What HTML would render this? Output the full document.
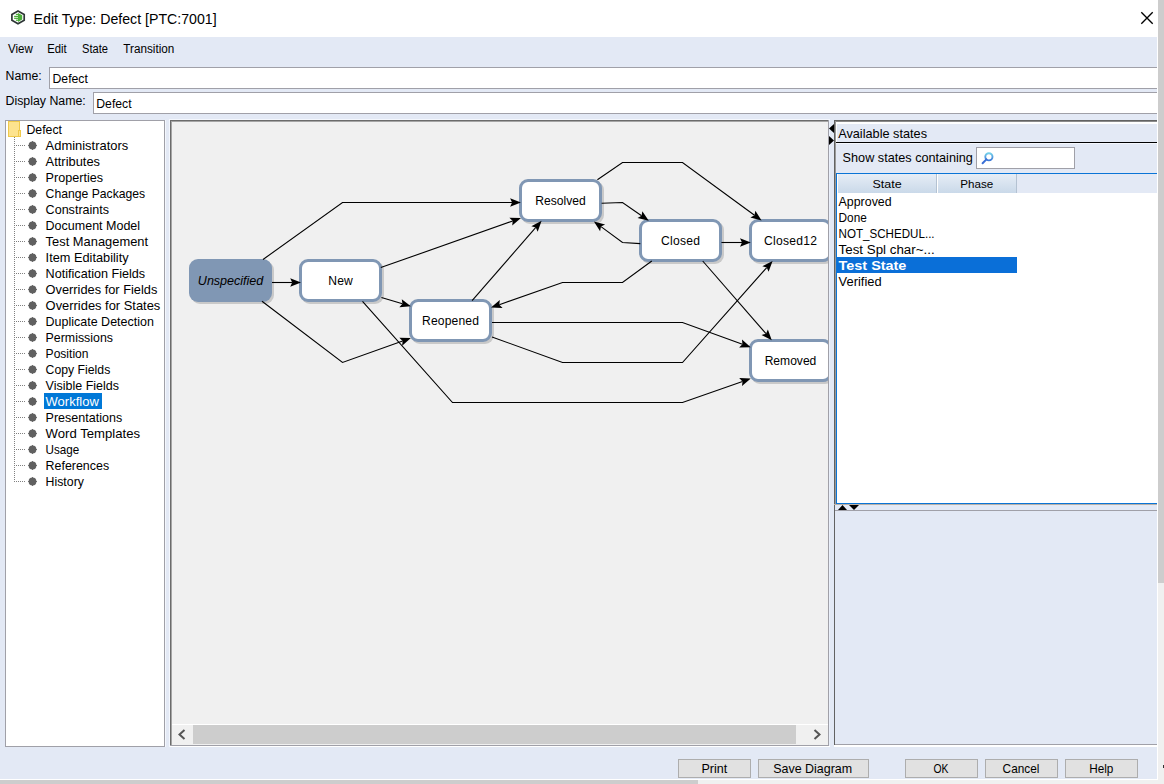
<!DOCTYPE html>
<html><head><meta charset="utf-8">
<style>
html,body{margin:0;padding:0;width:1164px;height:784px;overflow:hidden;background:#fff;}
svg{display:block;font-family:"Liberation Sans",sans-serif;}
text{stroke:none}
</style></head>
<body>
<svg width="1164" height="784" viewBox="0 0 1164 784">
<g shape-rendering="crispEdges">
<rect x="0" y="0" width="1164" height="784" fill="#ffffff"/>
<rect x="0" y="37" width="1157" height="742" fill="#e3e9f5"/>
<rect x="1158" y="0" width="6" height="784" fill="#f0f0f0"/>
<rect x="1158" y="0" width="6" height="583" fill="#cdcdcd"/>
<rect x="0" y="780" width="1158" height="4" fill="#f0f0f0"/>
<rect x="0" y="780" width="698" height="4" fill="#cdcdcd"/>
</g>
<path d="M18 11.1 L24.2 14.6 L24.2 20.3 L18 23.8 L11.9 20.3 L11.9 14.6 Z" fill="none" stroke="#2e3636" stroke-width="1.7"/>
<path d="M18 12.9 L22.2 15.3 L22.2 19.6 L18 21.9 Z" fill="#4caf3a"/>
<rect x="15.9" y="13.8" width="2.3" height="1.25" fill="#4caf3a"/>
<rect x="14.1" y="15.8" width="4.1" height="1.25" fill="#4caf3a"/>
<rect x="14.1" y="17.7" width="4.1" height="1.25" fill="#4caf3a"/>
<rect x="15.9" y="19.6" width="2.3" height="1.25" fill="#4caf3a"/>
<text x="33.6" y="24" font-size="14.2" fill="#000" textLength="183" lengthAdjust="spacingAndGlyphs" >Edit Type: Defect [PTC:7001]</text>
<path d="M1141.3 12.3 L1152.7 23.7 M1152.7 12.3 L1141.3 23.7" stroke="#000" stroke-width="1.35" fill="none"/>
<text x="8" y="53" font-size="12" fill="#000" textLength="24.8" lengthAdjust="spacingAndGlyphs" >View</text>
<text x="47.2" y="53" font-size="12" fill="#000" textLength="19.5" lengthAdjust="spacingAndGlyphs" >Edit</text>
<text x="82" y="53" font-size="12" fill="#000" textLength="26" lengthAdjust="spacingAndGlyphs" >State</text>
<text x="123.3" y="53" font-size="12" fill="#000" textLength="51" lengthAdjust="spacingAndGlyphs" >Transition</text>
<g shape-rendering="crispEdges">
<rect x="49.5" y="67.5" width="1107.5" height="21" fill="#fff"/>
<rect x="49" y="67" width="1108" height="1" fill="#a0a0a8"/><rect x="49" y="88" width="1108" height="1" fill="#a0a0a8"/><rect x="49" y="67" width="1" height="22" fill="#a0a0a8"/>
<rect x="93.5" y="92.5" width="1063.5" height="21" fill="#fff"/>
<rect x="93" y="92" width="1064" height="1" fill="#a0a0a8"/><rect x="93" y="113" width="1064" height="1" fill="#a0a0a8"/><rect x="93" y="92" width="1" height="22" fill="#a0a0a8"/>
</g>
<text x="5.5" y="80" font-size="12" fill="#000" textLength="36.2" lengthAdjust="spacingAndGlyphs" >Name:</text>
<text x="52.5" y="83" font-size="12.2" fill="#000" textLength="35.4" lengthAdjust="spacingAndGlyphs" >Defect</text>
<text x="5.5" y="105" font-size="12" fill="#000" textLength="80.3" lengthAdjust="spacingAndGlyphs" >Display Name:</text>
<text x="96.3" y="108" font-size="12.2" fill="#000" textLength="35.3" lengthAdjust="spacingAndGlyphs" >Defect</text>
<g shape-rendering="crispEdges">
<rect x="5.5" y="120.5" width="159" height="626" fill="#fff" stroke="#a0a0a8"/>
<rect x="8.5" y="121.5" width="11" height="15" fill="#fde38f" stroke="#efc94c"/>
<rect x="18.5" y="130.5" width="2" height="6" fill="#fde38f" stroke="#efc94c"/>
</g>
<text x="26.5" y="134" font-size="12.6" fill="#000" textLength="35.5" lengthAdjust="spacingAndGlyphs" >Defect</text>
<path d="M14 137h1v1h-1zM14 139h1v1h-1zM14 141h1v1h-1zM14 143h1v1h-1zM14 145h1v1h-1zM14 147h1v1h-1zM14 149h1v1h-1zM14 151h1v1h-1zM14 153h1v1h-1zM14 155h1v1h-1zM14 157h1v1h-1zM14 159h1v1h-1zM14 161h1v1h-1zM14 163h1v1h-1zM14 165h1v1h-1zM14 167h1v1h-1zM14 169h1v1h-1zM14 171h1v1h-1zM14 173h1v1h-1zM14 175h1v1h-1zM14 177h1v1h-1zM14 179h1v1h-1zM14 181h1v1h-1zM14 183h1v1h-1zM14 185h1v1h-1zM14 187h1v1h-1zM14 189h1v1h-1zM14 191h1v1h-1zM14 193h1v1h-1zM14 195h1v1h-1zM14 197h1v1h-1zM14 199h1v1h-1zM14 201h1v1h-1zM14 203h1v1h-1zM14 205h1v1h-1zM14 207h1v1h-1zM14 209h1v1h-1zM14 211h1v1h-1zM14 213h1v1h-1zM14 215h1v1h-1zM14 217h1v1h-1zM14 219h1v1h-1zM14 221h1v1h-1zM14 223h1v1h-1zM14 225h1v1h-1zM14 227h1v1h-1zM14 229h1v1h-1zM14 231h1v1h-1zM14 233h1v1h-1zM14 235h1v1h-1zM14 237h1v1h-1zM14 239h1v1h-1zM14 241h1v1h-1zM14 243h1v1h-1zM14 245h1v1h-1zM14 247h1v1h-1zM14 249h1v1h-1zM14 251h1v1h-1zM14 253h1v1h-1zM14 255h1v1h-1zM14 257h1v1h-1zM14 259h1v1h-1zM14 261h1v1h-1zM14 263h1v1h-1zM14 265h1v1h-1zM14 267h1v1h-1zM14 269h1v1h-1zM14 271h1v1h-1zM14 273h1v1h-1zM14 275h1v1h-1zM14 277h1v1h-1zM14 279h1v1h-1zM14 281h1v1h-1zM14 283h1v1h-1zM14 285h1v1h-1zM14 287h1v1h-1zM14 289h1v1h-1zM14 291h1v1h-1zM14 293h1v1h-1zM14 295h1v1h-1zM14 297h1v1h-1zM14 299h1v1h-1zM14 301h1v1h-1zM14 303h1v1h-1zM14 305h1v1h-1zM14 307h1v1h-1zM14 309h1v1h-1zM14 311h1v1h-1zM14 313h1v1h-1zM14 315h1v1h-1zM14 317h1v1h-1zM14 319h1v1h-1zM14 321h1v1h-1zM14 323h1v1h-1zM14 325h1v1h-1zM14 327h1v1h-1zM14 329h1v1h-1zM14 331h1v1h-1zM14 333h1v1h-1zM14 335h1v1h-1zM14 337h1v1h-1zM14 339h1v1h-1zM14 341h1v1h-1zM14 343h1v1h-1zM14 345h1v1h-1zM14 347h1v1h-1zM14 349h1v1h-1zM14 351h1v1h-1zM14 353h1v1h-1zM14 355h1v1h-1zM14 357h1v1h-1zM14 359h1v1h-1zM14 361h1v1h-1zM14 363h1v1h-1zM14 365h1v1h-1zM14 367h1v1h-1zM14 369h1v1h-1zM14 371h1v1h-1zM14 373h1v1h-1zM14 375h1v1h-1zM14 377h1v1h-1zM14 379h1v1h-1zM14 381h1v1h-1zM14 383h1v1h-1zM14 385h1v1h-1zM14 387h1v1h-1zM14 389h1v1h-1zM14 391h1v1h-1zM14 393h1v1h-1zM14 395h1v1h-1zM14 397h1v1h-1zM14 399h1v1h-1zM14 401h1v1h-1zM14 403h1v1h-1zM14 405h1v1h-1zM14 407h1v1h-1zM14 409h1v1h-1zM14 411h1v1h-1zM14 413h1v1h-1zM14 415h1v1h-1zM14 417h1v1h-1zM14 419h1v1h-1zM14 421h1v1h-1zM14 423h1v1h-1zM14 425h1v1h-1zM14 427h1v1h-1zM14 429h1v1h-1zM14 431h1v1h-1zM14 433h1v1h-1zM14 435h1v1h-1zM14 437h1v1h-1zM14 439h1v1h-1zM14 441h1v1h-1zM14 443h1v1h-1zM14 445h1v1h-1zM14 447h1v1h-1zM14 449h1v1h-1zM14 451h1v1h-1zM14 453h1v1h-1zM14 455h1v1h-1zM14 457h1v1h-1zM14 459h1v1h-1zM14 461h1v1h-1zM14 463h1v1h-1zM14 465h1v1h-1zM14 467h1v1h-1zM14 469h1v1h-1zM14 471h1v1h-1zM14 473h1v1h-1zM14 475h1v1h-1zM14 477h1v1h-1zM14 479h1v1h-1zM14 481h1v1h-1zM16 145h1v1h-1zM18 145h1v1h-1zM20 145h1v1h-1zM22 145h1v1h-1zM24 145h1v1h-1zM16 161h1v1h-1zM18 161h1v1h-1zM20 161h1v1h-1zM22 161h1v1h-1zM24 161h1v1h-1zM16 177h1v1h-1zM18 177h1v1h-1zM20 177h1v1h-1zM22 177h1v1h-1zM24 177h1v1h-1zM16 193h1v1h-1zM18 193h1v1h-1zM20 193h1v1h-1zM22 193h1v1h-1zM24 193h1v1h-1zM16 209h1v1h-1zM18 209h1v1h-1zM20 209h1v1h-1zM22 209h1v1h-1zM24 209h1v1h-1zM16 225h1v1h-1zM18 225h1v1h-1zM20 225h1v1h-1zM22 225h1v1h-1zM24 225h1v1h-1zM16 241h1v1h-1zM18 241h1v1h-1zM20 241h1v1h-1zM22 241h1v1h-1zM24 241h1v1h-1zM16 257h1v1h-1zM18 257h1v1h-1zM20 257h1v1h-1zM22 257h1v1h-1zM24 257h1v1h-1zM16 273h1v1h-1zM18 273h1v1h-1zM20 273h1v1h-1zM22 273h1v1h-1zM24 273h1v1h-1zM16 289h1v1h-1zM18 289h1v1h-1zM20 289h1v1h-1zM22 289h1v1h-1zM24 289h1v1h-1zM16 305h1v1h-1zM18 305h1v1h-1zM20 305h1v1h-1zM22 305h1v1h-1zM24 305h1v1h-1zM16 321h1v1h-1zM18 321h1v1h-1zM20 321h1v1h-1zM22 321h1v1h-1zM24 321h1v1h-1zM16 337h1v1h-1zM18 337h1v1h-1zM20 337h1v1h-1zM22 337h1v1h-1zM24 337h1v1h-1zM16 353h1v1h-1zM18 353h1v1h-1zM20 353h1v1h-1zM22 353h1v1h-1zM24 353h1v1h-1zM16 369h1v1h-1zM18 369h1v1h-1zM20 369h1v1h-1zM22 369h1v1h-1zM24 369h1v1h-1zM16 385h1v1h-1zM18 385h1v1h-1zM20 385h1v1h-1zM22 385h1v1h-1zM24 385h1v1h-1zM16 401h1v1h-1zM18 401h1v1h-1zM20 401h1v1h-1zM22 401h1v1h-1zM24 401h1v1h-1zM16 417h1v1h-1zM18 417h1v1h-1zM20 417h1v1h-1zM22 417h1v1h-1zM24 417h1v1h-1zM16 433h1v1h-1zM18 433h1v1h-1zM20 433h1v1h-1zM22 433h1v1h-1zM24 433h1v1h-1zM16 449h1v1h-1zM18 449h1v1h-1zM20 449h1v1h-1zM22 449h1v1h-1zM24 449h1v1h-1zM16 465h1v1h-1zM18 465h1v1h-1zM20 465h1v1h-1zM22 465h1v1h-1zM24 465h1v1h-1zM16 481h1v1h-1zM18 481h1v1h-1zM20 481h1v1h-1zM22 481h1v1h-1zM24 481h1v1h-1z" fill="#808080" shape-rendering="crispEdges"/>
<circle cx="32.5" cy="145.5" r="3.9" fill="#606060"/>
<path d="M32 141h1v1h-1zM32 149h1v1h-1zM28 145h1v1h-1zM36 145h1v1h-1z" fill="#6a6a6a" shape-rendering="crispEdges"/>
<text x="45.6" y="149.75" font-size="12.6" fill="#000" textLength="82.6" lengthAdjust="spacingAndGlyphs" >Administrators</text>
<circle cx="32.5" cy="161.5" r="3.9" fill="#606060"/>
<path d="M32 157h1v1h-1zM32 165h1v1h-1zM28 161h1v1h-1zM36 161h1v1h-1z" fill="#6a6a6a" shape-rendering="crispEdges"/>
<text x="45.6" y="165.75" font-size="12.6" fill="#000" textLength="54.4" lengthAdjust="spacingAndGlyphs" >Attributes</text>
<circle cx="32.5" cy="177.5" r="3.9" fill="#606060"/>
<path d="M32 173h1v1h-1zM32 181h1v1h-1zM28 177h1v1h-1zM36 177h1v1h-1z" fill="#6a6a6a" shape-rendering="crispEdges"/>
<text x="45.6" y="181.75" font-size="12.6" fill="#000" textLength="57.4" lengthAdjust="spacingAndGlyphs" >Properties</text>
<circle cx="32.5" cy="193.5" r="3.9" fill="#606060"/>
<path d="M32 189h1v1h-1zM32 197h1v1h-1zM28 193h1v1h-1zM36 193h1v1h-1z" fill="#6a6a6a" shape-rendering="crispEdges"/>
<text x="45.6" y="197.75" font-size="12.6" fill="#000" textLength="99.6" lengthAdjust="spacingAndGlyphs" >Change Packages</text>
<circle cx="32.5" cy="209.5" r="3.9" fill="#606060"/>
<path d="M32 205h1v1h-1zM32 213h1v1h-1zM28 209h1v1h-1zM36 209h1v1h-1z" fill="#6a6a6a" shape-rendering="crispEdges"/>
<text x="45.6" y="213.75" font-size="12.6" fill="#000" textLength="63.5" lengthAdjust="spacingAndGlyphs" >Constraints</text>
<circle cx="32.5" cy="225.5" r="3.9" fill="#606060"/>
<path d="M32 221h1v1h-1zM32 229h1v1h-1zM28 225h1v1h-1zM36 225h1v1h-1z" fill="#6a6a6a" shape-rendering="crispEdges"/>
<text x="45.6" y="229.75" font-size="12.6" fill="#000" textLength="94.5" lengthAdjust="spacingAndGlyphs" >Document Model</text>
<circle cx="32.5" cy="241.5" r="3.9" fill="#606060"/>
<path d="M32 237h1v1h-1zM32 245h1v1h-1zM28 241h1v1h-1zM36 241h1v1h-1z" fill="#6a6a6a" shape-rendering="crispEdges"/>
<text x="45.6" y="245.75" font-size="12.6" fill="#000" textLength="102.5" lengthAdjust="spacingAndGlyphs" >Test Management</text>
<circle cx="32.5" cy="257.5" r="3.9" fill="#606060"/>
<path d="M32 253h1v1h-1zM32 261h1v1h-1zM28 257h1v1h-1zM36 257h1v1h-1z" fill="#6a6a6a" shape-rendering="crispEdges"/>
<text x="45.6" y="261.75" font-size="12.6" fill="#000" textLength="83" lengthAdjust="spacingAndGlyphs" >Item Editability</text>
<circle cx="32.5" cy="273.5" r="3.9" fill="#606060"/>
<path d="M32 269h1v1h-1zM32 277h1v1h-1zM28 273h1v1h-1zM36 273h1v1h-1z" fill="#6a6a6a" shape-rendering="crispEdges"/>
<text x="45.6" y="277.75" font-size="12.6" fill="#000" textLength="99.6" lengthAdjust="spacingAndGlyphs" >Notification Fields</text>
<circle cx="32.5" cy="289.5" r="3.9" fill="#606060"/>
<path d="M32 285h1v1h-1zM32 293h1v1h-1zM28 289h1v1h-1zM36 289h1v1h-1z" fill="#6a6a6a" shape-rendering="crispEdges"/>
<text x="45.6" y="293.75" font-size="12.6" fill="#000" textLength="111.7" lengthAdjust="spacingAndGlyphs" >Overrides for Fields</text>
<circle cx="32.5" cy="305.5" r="3.9" fill="#606060"/>
<path d="M32 301h1v1h-1zM32 309h1v1h-1zM28 305h1v1h-1zM36 305h1v1h-1z" fill="#6a6a6a" shape-rendering="crispEdges"/>
<text x="45.6" y="309.75" font-size="12.6" fill="#000" textLength="114.7" lengthAdjust="spacingAndGlyphs" >Overrides for States</text>
<circle cx="32.5" cy="321.5" r="3.9" fill="#606060"/>
<path d="M32 317h1v1h-1zM32 325h1v1h-1zM28 321h1v1h-1zM36 321h1v1h-1z" fill="#6a6a6a" shape-rendering="crispEdges"/>
<text x="45.6" y="325.75" font-size="12.6" fill="#000" textLength="108.3" lengthAdjust="spacingAndGlyphs" >Duplicate Detection</text>
<circle cx="32.5" cy="337.5" r="3.9" fill="#606060"/>
<path d="M32 333h1v1h-1zM32 341h1v1h-1zM28 337h1v1h-1zM36 337h1v1h-1z" fill="#6a6a6a" shape-rendering="crispEdges"/>
<text x="45.6" y="341.75" font-size="12.6" fill="#000" textLength="67.4" lengthAdjust="spacingAndGlyphs" >Permissions</text>
<circle cx="32.5" cy="353.5" r="3.9" fill="#606060"/>
<path d="M32 349h1v1h-1zM32 357h1v1h-1zM28 353h1v1h-1zM36 353h1v1h-1z" fill="#6a6a6a" shape-rendering="crispEdges"/>
<text x="45.6" y="357.75" font-size="12.6" fill="#000" textLength="42.9" lengthAdjust="spacingAndGlyphs" >Position</text>
<circle cx="32.5" cy="369.5" r="3.9" fill="#606060"/>
<path d="M32 365h1v1h-1zM32 373h1v1h-1zM28 369h1v1h-1zM36 369h1v1h-1z" fill="#6a6a6a" shape-rendering="crispEdges"/>
<text x="45.6" y="373.75" font-size="12.6" fill="#000" textLength="64.7" lengthAdjust="spacingAndGlyphs" >Copy Fields</text>
<circle cx="32.5" cy="385.5" r="3.9" fill="#606060"/>
<path d="M32 381h1v1h-1zM32 389h1v1h-1zM28 385h1v1h-1zM36 385h1v1h-1z" fill="#6a6a6a" shape-rendering="crispEdges"/>
<text x="45.6" y="389.75" font-size="12.6" fill="#000" textLength="73.4" lengthAdjust="spacingAndGlyphs" >Visible Fields</text>
<circle cx="32.5" cy="401.5" r="3.9" fill="#606060"/>
<path d="M32 397h1v1h-1zM32 405h1v1h-1zM28 401h1v1h-1zM36 401h1v1h-1z" fill="#6a6a6a" shape-rendering="crispEdges"/>
<rect x="44" y="393" width="58" height="16" fill="#0078d7" shape-rendering="crispEdges"/>
<text x="45.6" y="405.75" font-size="12.6" fill="#fff" textLength="53.2" lengthAdjust="spacingAndGlyphs" >Workflow</text>
<circle cx="32.5" cy="417.5" r="3.9" fill="#606060"/>
<path d="M32 413h1v1h-1zM32 421h1v1h-1zM28 417h1v1h-1zM36 417h1v1h-1z" fill="#6a6a6a" shape-rendering="crispEdges"/>
<text x="45.6" y="421.75" font-size="12.6" fill="#000" textLength="76.6" lengthAdjust="spacingAndGlyphs" >Presentations</text>
<circle cx="32.5" cy="433.5" r="3.9" fill="#606060"/>
<path d="M32 429h1v1h-1zM32 437h1v1h-1zM28 433h1v1h-1zM36 433h1v1h-1z" fill="#6a6a6a" shape-rendering="crispEdges"/>
<text x="45.6" y="437.75" font-size="12.6" fill="#000" textLength="94.5" lengthAdjust="spacingAndGlyphs" >Word Templates</text>
<circle cx="32.5" cy="449.5" r="3.9" fill="#606060"/>
<path d="M32 445h1v1h-1zM32 453h1v1h-1zM28 449h1v1h-1zM36 449h1v1h-1z" fill="#6a6a6a" shape-rendering="crispEdges"/>
<text x="45.6" y="453.75" font-size="12.6" fill="#000" textLength="33.7" lengthAdjust="spacingAndGlyphs" >Usage</text>
<circle cx="32.5" cy="465.5" r="3.9" fill="#606060"/>
<path d="M32 461h1v1h-1zM32 469h1v1h-1zM28 465h1v1h-1zM36 465h1v1h-1z" fill="#6a6a6a" shape-rendering="crispEdges"/>
<text x="45.6" y="469.75" font-size="12.6" fill="#000" textLength="63.5" lengthAdjust="spacingAndGlyphs" >References</text>
<circle cx="32.5" cy="481.5" r="3.9" fill="#606060"/>
<path d="M32 477h1v1h-1zM32 485h1v1h-1zM28 481h1v1h-1zM36 481h1v1h-1z" fill="#6a6a6a" shape-rendering="crispEdges"/>
<text x="45.6" y="485.75" font-size="12.6" fill="#000" textLength="38.3" lengthAdjust="spacingAndGlyphs" >History</text>
<g shape-rendering="crispEdges">
<rect x="170" y="120" width="659" height="626" fill="#f0f0f0"/>
</g>
<defs><clipPath id="dclip"><rect x="171" y="121" width="657" height="603"/></clipPath></defs>
<g clip-path="url(#dclip)">
<rect x="191" y="261" width="83" height="43" rx="9" fill="#c9c9c9"/>
<rect x="189" y="259" width="83" height="43" rx="9" fill="#8097b4"/>
<text x="197.85" y="285" font-size="12.6" fill="#000" textLength="65.3" lengthAdjust="spacing" font-style="italic" >Unspecified</text>
<rect x="301" y="261" width="83" height="43" rx="9" fill="#c9c9c9"/>
<rect x="300.5" y="260.5" width="80" height="40" rx="7.5" fill="#fff" stroke="#8097b4" stroke-width="3"/>
<text x="328.32" y="285" font-size="12.1" fill="#000" textLength="24.35" lengthAdjust="spacing" >New</text>
<rect x="411" y="301" width="83" height="43" rx="9" fill="#c9c9c9"/>
<rect x="410.5" y="300.5" width="80" height="40" rx="7.5" fill="#fff" stroke="#8097b4" stroke-width="3"/>
<text x="422.05" y="325" font-size="12.1" fill="#000" textLength="56.9" lengthAdjust="spacing" >Reopened</text>
<rect x="521" y="181" width="83" height="43" rx="9" fill="#c9c9c9"/>
<rect x="520.5" y="180.5" width="80" height="40" rx="7.5" fill="#fff" stroke="#8097b4" stroke-width="3"/>
<text x="535.2" y="205" font-size="12.1" fill="#000" textLength="50.6" lengthAdjust="spacing" >Resolved</text>
<rect x="641" y="221" width="83" height="43" rx="9" fill="#c9c9c9"/>
<rect x="640.5" y="220.5" width="80" height="40" rx="7.5" fill="#fff" stroke="#8097b4" stroke-width="3"/>
<text x="661.1" y="245" font-size="12.1" fill="#000" textLength="38.8" lengthAdjust="spacing" >Closed</text>
<rect x="751" y="221" width="83" height="43" rx="9" fill="#c9c9c9"/>
<rect x="750.5" y="220.5" width="80" height="40" rx="7.5" fill="#fff" stroke="#8097b4" stroke-width="3"/>
<text x="764.05" y="245" font-size="12.1" fill="#000" textLength="52.9" lengthAdjust="spacing" >Closed12</text>
<rect x="751" y="341" width="83" height="43" rx="9" fill="#c9c9c9"/>
<rect x="750.5" y="340.5" width="80" height="40" rx="7.5" fill="#fff" stroke="#8097b4" stroke-width="3"/>
<text x="764.65" y="365" font-size="12.1" fill="#000" textLength="51.7" lengthAdjust="spacing" >Removed</text>
<path d="M272 282.5 L292.20 282.50" fill="none" stroke="#000" stroke-width="1.1" stroke-linejoin="miter"/>
<path d="M301 282.5 L290.20 286.70 L292.20 282.50 L290.20 278.30 Z" fill="#000"/>
<path d="M263 259.5 L342.5 202.5 L512.10 202.50" fill="none" stroke="#000" stroke-width="1.1" stroke-linejoin="miter"/>
<path d="M520.9 202.5 L510.10 206.70 L512.10 202.50 L510.10 198.30 Z" fill="#000"/>
<path d="M262 301.3 L342.5 362.5 L402.61 341.06" fill="none" stroke="#000" stroke-width="1.1" stroke-linejoin="miter"/>
<path d="M410.9 338.1 L402.14 345.68 L402.61 341.06 L399.32 337.77 Z" fill="#000"/>
<path d="M380.8 267.6 L512.70 220.94" fill="none" stroke="#000" stroke-width="1.1" stroke-linejoin="miter"/>
<path d="M521 218 L512.22 225.56 L512.70 220.94 L509.42 217.64 Z" fill="#000"/>
<path d="M381.4 297.5 L402.47 303.78" fill="none" stroke="#000" stroke-width="1.1" stroke-linejoin="miter"/>
<path d="M410.9 306.3 L399.35 307.24 L402.47 303.78 L401.75 299.19 Z" fill="#000"/>
<path d="M362.5 301.3 L452.5 402.5 L682.5 402.5 L742.50 381.42" fill="none" stroke="#000" stroke-width="1.1" stroke-linejoin="miter"/>
<path d="M750.8 378.5 L742.00 386.04 L742.50 381.42 L739.22 378.12 Z" fill="#000"/>
<path d="M472.1 300.6 L535.82 227.44" fill="none" stroke="#000" stroke-width="1.1" stroke-linejoin="miter"/>
<path d="M541.6 220.8 L537.67 231.70 L535.82 227.44 L531.34 226.19 Z" fill="#000"/>
<path d="M492 322.5 L682.5 322.5 L742.43 344.20" fill="none" stroke="#000" stroke-width="1.1" stroke-linejoin="miter"/>
<path d="M750.7 347.2 L739.12 347.47 L742.43 344.20 L741.98 339.57 Z" fill="#000"/>
<path d="M492 337 L562.5 362.5 L682.5 362.5 L766.76 267.58" fill="none" stroke="#000" stroke-width="1.1" stroke-linejoin="miter"/>
<path d="M772.6 261 L768.57 271.87 L766.76 267.58 L762.29 266.29 Z" fill="#000"/>
<path d="M601.6 203.3 L622.5 202.5 L641.58 215.77" fill="none" stroke="#000" stroke-width="1.1" stroke-linejoin="miter"/>
<path d="M648.8 220.8 L637.54 218.08 L641.58 215.77 L642.33 211.18 Z" fill="#000"/>
<path d="M597.4 179.7 L622.5 162.5 L682.5 162.5 L754.50 215.20" fill="none" stroke="#000" stroke-width="1.1" stroke-linejoin="miter"/>
<path d="M761.6 220.4 L750.40 217.41 L754.50 215.20 L755.37 210.63 Z" fill="#000"/>
<path d="M640.3 243.6 L622.5 242.5 L600.98 226.62" fill="none" stroke="#000" stroke-width="1.1" stroke-linejoin="miter"/>
<path d="M593.9 221.4 L605.08 224.43 L600.98 226.62 L600.10 231.19 Z" fill="#000"/>
<path d="M651.8 261 L622.5 282.5 L562.5 282.5 L499.30 304.69" fill="none" stroke="#000" stroke-width="1.1" stroke-linejoin="miter"/>
<path d="M491 307.6 L499.80 300.06 L499.30 304.69 L502.58 307.99 Z" fill="#000"/>
<path d="M721.4 242.5 L742.00 242.50" fill="none" stroke="#000" stroke-width="1.1" stroke-linejoin="miter"/>
<path d="M750.8 242.5 L740.00 246.70 L742.00 242.50 L740.00 238.30 Z" fill="#000"/>
<path d="M702.7 261 L766.02 333.67" fill="none" stroke="#000" stroke-width="1.1" stroke-linejoin="miter"/>
<path d="M771.8 340.3 L761.54 334.92 L766.02 333.67 L767.87 329.40 Z" fill="#000"/>
</g>
<g shape-rendering="crispEdges">
<rect x="165" y="120" width="1" height="627" fill="#f4f7fd"/>
<rect x="169" y="119" width="661" height="1" fill="#f4f7fd"/>
<rect x="169" y="119" width="1" height="628" fill="#f4f7fd"/>
<rect x="170" y="120" width="659" height="1" fill="#6b6b6b"/>
<rect x="170" y="120" width="1" height="626" fill="#6b6b6b"/>
<rect x="171" y="121" width="657" height="1" fill="#a5a5a5"/>
<rect x="171" y="121" width="1" height="624" fill="#a5a5a5"/>
<rect x="828" y="120" width="1" height="626" fill="#a0a0a8"/>
<rect x="170" y="745" width="659" height="1" fill="#a0a0a8"/>
<rect x="829" y="120" width="1" height="627" fill="#eaf0fb"/>
<rect x="170" y="746" width="660" height="1" fill="#ffffff"/>
<rect x="172" y="724" width="656" height="1" fill="#ffffff"/>
<rect x="172" y="725" width="656" height="20" fill="#f0f0f0"/>
<rect x="193" y="725" width="603" height="19" fill="#cdcdcd"/>
</g>
<path d="M184.5 730 L179.5 734.5 L184.5 739" fill="none" stroke="#555" stroke-width="2"/>
<path d="M814.5 730 L819.5 734.5 L814.5 739" fill="none" stroke="#555" stroke-width="2"/>
<g shape-rendering="crispEdges">
<path d="M834 124 L829 128.5 L834 133 Z" fill="#000" shape-rendering="geometricPrecision"/>
<path d="M829 136 L834 140.5 L829 145 Z" fill="#000" shape-rendering="geometricPrecision"/>
<rect x="834" y="120" width="323" height="1" fill="#626262"/>
<rect x="834" y="121" width="323" height="1" fill="#8a8a8a"/>
<rect x="834" y="120" width="1" height="625" fill="#626262"/>
<rect x="835" y="121" width="1" height="383" fill="#9a9a9a"/>
<rect x="836" y="122" width="321" height="2" fill="#ffffff"/>
<rect x="836" y="122" width="1" height="20" fill="#ffffff"/>
<rect x="836" y="142" width="321" height="1" fill="#000000"/>
<rect x="836" y="143" width="321" height="1" fill="#f4f7fd"/>
<rect x="976.5" y="147.5" width="98" height="21" fill="#fff" stroke="#a0a0a8"/>
<rect x="836" y="173" width="321" height="331" fill="#ffffff"/>
<rect x="836" y="173" width="321" height="1" fill="#0a74d6"/>
<rect x="836" y="173" width="1" height="331" fill="#0a74d6"/>
<rect x="836" y="503" width="321" height="1" fill="#0a74d6"/>
<rect x="837" y="174" width="320" height="19" fill="#e3e9f5"/>
</g>
<defs><linearGradient id="hg" x1="0" y1="0" x2="0" y2="1"><stop offset="0" stop-color="#e6edf6"/><stop offset="1" stop-color="#cad9e9"/></linearGradient></defs>
<g shape-rendering="crispEdges">
<rect x="837" y="174" width="180" height="19" fill="url(#hg)"/>
<rect x="837" y="174" width="1" height="19" fill="#ffffff"/>
<rect x="936" y="174" width="1" height="19" fill="#b4c2d2"/>
<rect x="937" y="174" width="1" height="19" fill="#ffffff"/>
<rect x="1016" y="174" width="1" height="19" fill="#b4c2d2"/>
<rect x="837" y="257" width="180" height="16" fill="#0a6fd8"/>
</g>
<defs><linearGradient id="mg" x1="0" y1="0" x2="0" y2="1"><stop offset="0" stop-color="#74d0ea"/><stop offset="1" stop-color="#3c78d8"/></linearGradient></defs>
<circle cx="988.9" cy="156.8" r="3.6" fill="none" stroke="url(#mg)" stroke-width="1.9"/>
<path d="M986.4 159.4 L982.6 163.2" stroke="#3a6fd6" stroke-width="2" stroke-linecap="round"/>
<text x="838.2" y="137.7" font-size="12.2" fill="#000" textLength="88.8" lengthAdjust="spacingAndGlyphs" >Available states</text>
<text x="842.6" y="161.6" font-size="12.2" fill="#000" textLength="130.3" lengthAdjust="spacingAndGlyphs" >Show states containing</text>
<text x="872.5" y="187.8" font-size="11.6" fill="#000" textLength="29.2" lengthAdjust="spacingAndGlyphs" >State</text>
<text x="960.3" y="187.7" font-size="11.6" fill="#000" textLength="33" lengthAdjust="spacingAndGlyphs" >Phase</text>
<text x="838.6" y="205.75" font-size="12" fill="#000" textLength="53" lengthAdjust="spacingAndGlyphs" >Approved</text>
<text x="838.6" y="221.75" font-size="12" fill="#000" textLength="28.2" lengthAdjust="spacingAndGlyphs" >Done</text>
<text x="838.6" y="237.75" font-size="12" fill="#000" textLength="96" lengthAdjust="spacingAndGlyphs" >NOT_SCHEDUL...</text>
<text x="838.6" y="253.75" font-size="12" fill="#000" textLength="96" lengthAdjust="spacingAndGlyphs" >Test Spl char~...</text>
<text x="838.6" y="269.75" font-size="12" fill="#fff" textLength="67.8" lengthAdjust="spacingAndGlyphs" font-weight="bold" >Test State</text>
<text x="838.6" y="285.75" font-size="12" fill="#000" textLength="43" lengthAdjust="spacingAndGlyphs" >Verified</text>
<path d="M838 510 L842.5 505 L847 510 Z" fill="#000"/>
<path d="M849 505 L859 505 L854 510 Z" fill="#000"/>
<g shape-rendering="crispEdges">
<rect x="834" y="504" width="323" height="1" fill="#b8b0a8"/>
<rect x="835" y="510" width="322" height="1" fill="#a0a0a8"/>
<rect x="836" y="511" width="321" height="233" fill="#e3e9f5"/>
<rect x="835" y="744" width="322" height="1" fill="#a0a0a8"/>
<rect x="834" y="745" width="323" height="2" fill="#ffffff"/>
</g>
<rect x="678.5" y="759.5" width="72" height="18" fill="#e1e1e1" stroke="#adadad" shape-rendering="crispEdges"/>
<text x="701.4" y="773" font-size="12.2" fill="#000" textLength="25.8" lengthAdjust="spacingAndGlyphs" >Print</text>
<rect x="758.5" y="759.5" width="110" height="18" fill="#e1e1e1" stroke="#adadad" shape-rendering="crispEdges"/>
<text x="773.2" y="773" font-size="12.2" fill="#000" textLength="79" lengthAdjust="spacingAndGlyphs" >Save Diagram</text>
<rect x="905.5" y="759.5" width="72" height="18" fill="#e1e1e1" stroke="#adadad" shape-rendering="crispEdges"/>
<text x="933.5" y="773" font-size="12.2" fill="#000" textLength="15" lengthAdjust="spacingAndGlyphs" >OK</text>
<rect x="985.5" y="759.5" width="72" height="18" fill="#e1e1e1" stroke="#adadad" shape-rendering="crispEdges"/>
<text x="1002.6" y="773" font-size="12.2" fill="#000" textLength="36.8" lengthAdjust="spacingAndGlyphs" >Cancel</text>
<rect x="1065.5" y="759.5" width="72" height="18" fill="#e1e1e1" stroke="#adadad" shape-rendering="crispEdges"/>
<text x="1089.2" y="773" font-size="12.2" fill="#000" textLength="24.2" lengthAdjust="spacingAndGlyphs" >Help</text>
<rect x="1157" y="779" width="1" height="1" fill="#fff"/>
<rect x="0" y="779" width="1157" height="1" fill="#ffffff" shape-rendering="crispEdges"/>
<rect x="1163" y="765" width="1" height="3" fill="#333" shape-rendering="crispEdges"/>
</svg>
</body></html>
